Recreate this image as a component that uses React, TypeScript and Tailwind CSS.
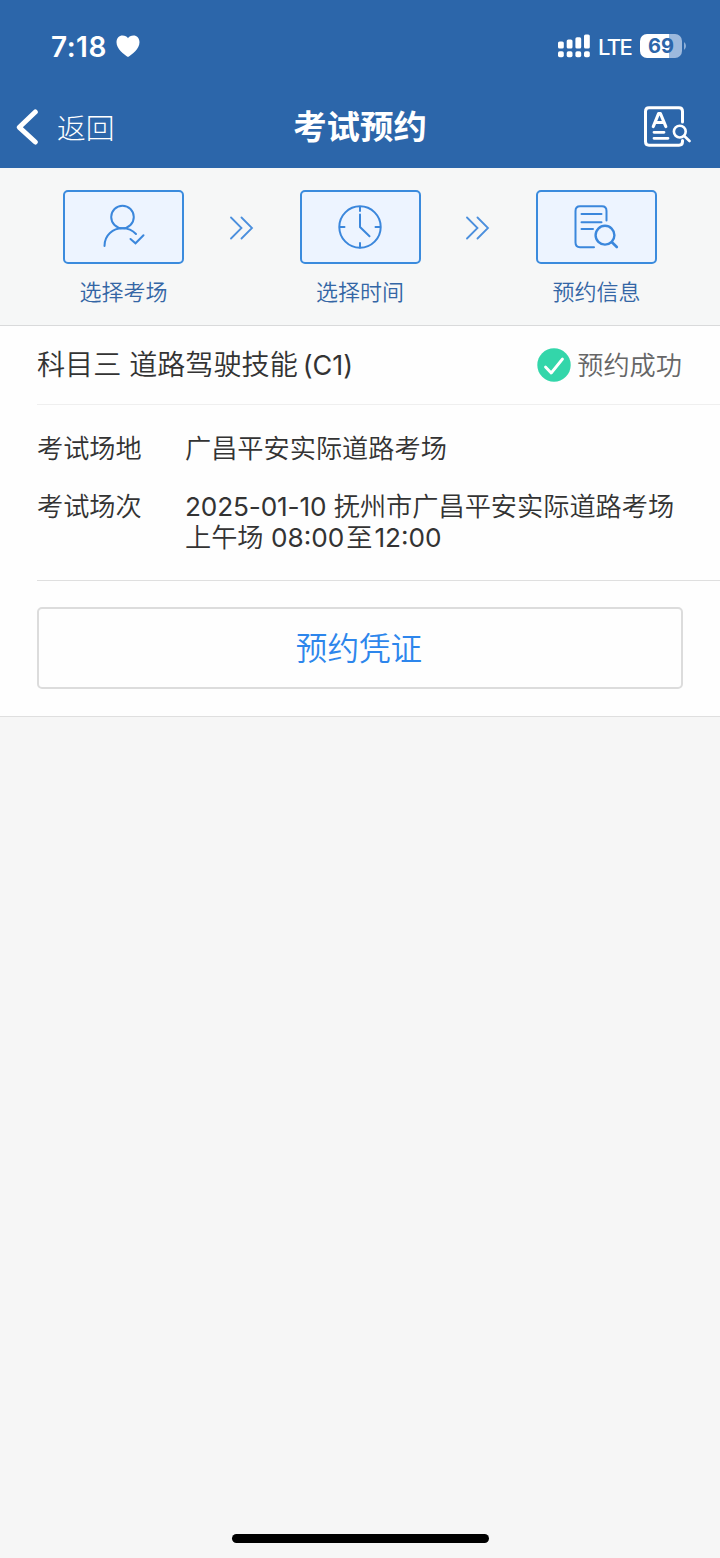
import type { ReactNode } from "react";

interface StepProps {
  label: string;
  children: ReactNode;
}

function StatusBar() {
  return (
    <div className="flex h-[86px] items-center justify-between pt-1.5 pr-[34px] pl-[51px]">
      <div className="flex items-center gap-[9px]">
        <span className="w-[56px] pt-px text-[28px] leading-8 font-semibold tracking-[0.5px]">7:18</span>
        <svg width="24" height="22" viewBox="0 0 24 22" fill="currentColor">
          <path d="M12 22C8 19.5 0.5 14 0.5 7.3C0.5 3.2 3.2 0.6 6.5 0.6C9 0.6 11 1.7 12 3.2C13 1.7 15 0.6 17.5 0.6C20.8 0.6 23.5 3.2 23.5 7.3C23.5 14 16 19.5 12 22Z" />
        </svg>
      </div>
      <div className="flex items-center">
        <svg width="32" height="24" viewBox="0 0 32 24" fill="currentColor">
          <rect x="0" y="7.5" width="5.8" height="7" rx="1.6" />
          <rect x="8.7" y="5.5" width="5.8" height="9" rx="1.6" />
          <rect x="17.4" y="3.3" width="5.8" height="11.2" rx="1.6" />
          <rect x="26" y="0.5" width="5.8" height="14" rx="1.6" />
          <rect x="0" y="17.3" width="5.8" height="6" rx="1.8" />
          <rect x="8.7" y="17.3" width="5.8" height="6" rx="1.8" />
          <rect x="17.4" y="17.3" width="5.8" height="6" rx="1.8" />
          <rect x="26" y="17.3" width="5.8" height="6" rx="1.8" />
        </svg>
        <span className="ml-2 w-[34px] pt-px text-[22px] leading-6 font-medium tracking-[-1.6px]">LTE</span>
        <div className="ml-2 flex h-6 w-[42px] items-center justify-center rounded-[7px] bg-linear-to-r from-white from-69% to-[#9db9dd] to-69% text-[20px] leading-6 font-bold text-[#2c66aa]">
          69
        </div>
        <svg className="ml-0.5" width="2" height="8" viewBox="0 0 2 8" fill="#8fb0d8">
          <path d="M0 0Q2 1.5 2 4T0 8Z" />
        </svg>
      </div>
    </div>
  );
}

function NavBar() {
  return (
    <div className="grid h-[82px] grid-cols-[1fr_auto_1fr] items-center pr-[29px] pl-4">
      <div className="flex items-center gap-[18px]">
        <svg width="23" height="36" viewBox="0 0 23 36" fill="none" stroke="currentColor" strokeWidth="5" strokeLinecap="round" strokeLinejoin="round">
          <path d="M19.3 3L3.3 18.3L19.3 33" />
        </svg>
        <span className="pt-1 text-[28.8px] leading-9 font-light">返回</span>
      </div>
      <h1 className="ml-[13px] text-[33.4px] leading-10 font-semibold">考试预约</h1>
      <svg className="justify-self-end" width="48" height="42" viewBox="0 0 48 42" fill="none" stroke="currentColor" strokeLinecap="round">
        <path d="M39.5 16V5.5Q39.5 1.8 36 1.8H6Q2.5 1.8 2.5 5.5V35.5Q2.5 39.2 6 39.2H36Q39.5 39.2 39.5 35.5V34.5" strokeWidth="3" />
        <path d="M10.3 20.5L15.6 7.5H17.4L22.8 20.5M12.4 16.5H20.6" strokeWidth="3.2" strokeLinejoin="round" />
        <path d="M11 26.3H21M11 32.3H25" strokeWidth="2.8" />
        <circle cx="36.8" cy="25.6" r="5.9" strokeWidth="2.6" />
        <path d="M41.3 30L46.5 35" strokeWidth="2.6" />
      </svg>
    </div>
  );
}

function Step({ label, children }: StepProps) {
  return (
    <div className="flex flex-col items-center">
      <div className="flex h-[74px] w-[121px] items-center justify-center rounded-[5px] border-2 border-[#3b8bdd] bg-[#edf4ff]">
        <svg width="48" height="48" viewBox="0 0 48 48" fill="none" stroke="#3b87dc" strokeWidth="2" strokeLinecap="round">
          {children}
        </svg>
      </div>
      <span className="mt-3 text-[22px] leading-8 font-[350] text-[#3466a5]">{label}</span>
    </div>
  );
}

function StepArrow() {
  return (
    <svg className="mt-[26px]" width="24" height="24" viewBox="0 0 24 24" fill="none" stroke="#4b8fdd" strokeWidth="1.8" strokeLinecap="round">
      <path d="M1 1.5L11.5 12L1 22.5M11.5 1.5L22 12L11.5 22.5" />
    </svg>
  );
}

function Steps() {
  return (
    <div className="flex h-[158px] items-start justify-between border-b border-[#d9dadb] bg-[#f6f7f7] pt-[22px] pr-[63px] pl-[63px]">
      <Step label="选择考场">
        <circle cx="22.5" cy="14" r="11.3" />
        <path d="M4.5 43C4.5 32 13 25.3 22.5 25.3C28 25.3 32.5 27.3 36 31" />
        <path d="M30.5 36L35.5 40.3L43.5 32.3" />
      </Step>
      <StepArrow />
      <Step label="选择时间">
        <circle cx="24" cy="24" r="20.7" />
        <path d="M24 4V8M24 40V44.5M4 24H8.5M39.5 24H44M24 11.5V24L33.5 33.3" />
      </Step>
      <StepArrow />
      <Step label="预约信息">
        <path d="M33.5 17.5V8Q33.5 3.3 29 3.3H7Q2.5 3.3 2.5 8V39.5Q2.5 44.2 7 44.2H21" />
        <path d="M8.5 11H28.5M8.5 19.2H28.5M8.5 26H20" />
        <circle cx="32" cy="32.2" r="9.4" strokeWidth="2.4" />
        <path d="M39.2 39.5L43.8 44" strokeWidth="2.6" />
      </Step>
    </div>
  );
}

export default function App() {
  return (
    <div className="flex h-[1558px] w-[720px] flex-col bg-[#f6f6f6] font-['Inter','Noto_Sans_CJK_SC',sans-serif] text-[#333]">
      <header className="h-[168px] bg-[#2c66aa] text-white">
        <StatusBar />
        <NavBar />
      </header>
      <Steps />
      <section className="h-[391px] border-b border-[#dfdfdf] bg-[#fefefe] pl-[37px] font-[350]">
        <div className="flex h-[79px] items-center justify-between border-b border-[#efefef] pr-[38px]">
          <h2 className="pt-px text-[28.1px] leading-9 font-[350]">
            科目三 道路驾驶技能<span className="ml-[5px] text-[27px] font-normal">(C1)</span>
          </h2>
          <div className="flex items-center gap-1.5">
            <svg width="34" height="34" viewBox="0 0 34 34" fill="none">
              <circle cx="17" cy="17" r="16.7" fill="#33d6aa" />
              <path d="M8.5 19L14.2 25L25.5 11" stroke="white" strokeWidth="2.8" strokeLinecap="round" strokeLinejoin="round" />
            </svg>
            <span className="pt-px text-[26.2px] leading-9 text-[#666]">预约成功</span>
          </div>
        </div>
        <div className="h-44 border-b border-[#dfdfdf] pt-7 text-[26.2px] leading-[31px]">
          <div className="flex">
            <span className="w-[148px]">考试场地</span>
            <span>广昌平安实际道路考场</span>
          </div>
          <div className="mt-[27px] flex">
            <span className="w-[148px]">考试场次</span>
            <div>
              <p className="whitespace-nowrap">
                <span className="font-normal tracking-[-0.15px]">2025-01-10</span> 抚州市广昌平安实际道路考场
              </p>
              <p className="whitespace-nowrap">
                上午场 <span className="font-normal">08:00</span>
                <span className="mx-[2px]">至</span>
                <span className="font-normal">12:00</span>
              </p>
            </div>
          </div>
        </div>
        <button className="mt-[26px] block h-[82px] w-[646px] rounded-[5px] border-2 border-[#dcdcdc] pt-0.5 pr-0.5 text-[31.6px] text-[#2d86ec]">
          预约凭证
        </button>
      </section>
      <div className="mt-auto mb-[15px] h-[9px] w-[257px] self-center rounded-full bg-black" />
    </div>
  );
}
